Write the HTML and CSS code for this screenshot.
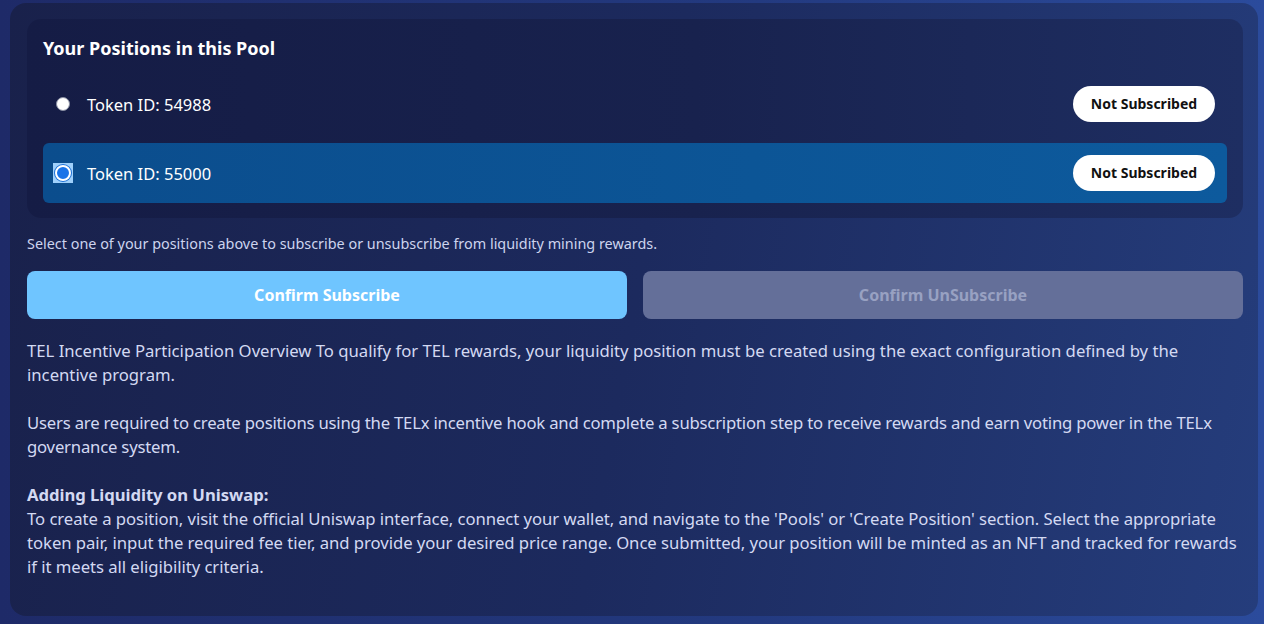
FILE: index.html
```html
<!DOCTYPE html>
<html lang="en">
<head>
	<meta charset="UTF-8">
	<meta name="viewport" content="width=device-width">
	<title>TELx positions</title>
	<link rel="stylesheet" href="styles.css">
</head>
<body>
<main class="card">

	<section class="positions">
		<h2 class="positions-title">Your Positions in this Pool</h2>

		<label class="position">
			<span class="radio-wrap"><input type="radio" name="position" class="radio" value="54988"></span>
			<span class="token-id">Token ID: 54988</span>
			<span class="badge">Not Subscribed</span>
		</label>

		<label class="position selected">
			<span class="radio-wrap focused"><input type="radio" name="position" class="radio" value="55000" checked></span>
			<span class="token-id">Token ID: 55000</span>
			<span class="badge">Not Subscribed</span>
		</label>
	</section>

	<p class="hint">Select one of your positions above to subscribe or unsubscribe from liquidity mining rewards.</p>

	<div class="actions">
		<button class="btn btn-primary">Confirm Subscribe</button>
		<button class="btn btn-disabled" disabled>Confirm UnSubscribe</button>
	</div>

	<div class="overview">
		<p>TEL Incentive Participation Overview To qualify for TEL rewards, your liquidity position must be created using the exact configuration defined by the incentive program.</p>
		<p class="tight">Users are required to create positions using the TELx incentive hook and complete a subscription step to receive rewards and earn voting power in the TELx governance system.</p>
		<p class="snug"><strong>Adding Liquidity on Uniswap:</strong><br>
		To create a position, visit the official Uniswap interface, connect your wallet, and navigate to the 'Pools' or 'Create Position' section. Select the appropriate token pair, input the required fee tier, and provide your desired price range. Once submitted, your position will be minted as an NFT and tracked for rewards if it meets all eligibility criteria.</p>
	</div>

</main>
</body>
</html>
```

FILE: styles.css
```css
html, body { height: 100%; }

body {
	margin: 0;
	padding: 3px 6px 8px 10px;
	box-sizing: border-box;
	background: linear-gradient(90deg, #1e2a68 0%, #233a80 60%, #2b4b9c 100%);
	font-family: "Noto Sans", "Open Sans", sans-serif;
	color: #d3d9f2;
}

.card {
	height: 100%;
	box-sizing: border-box;
	padding: 16px 15px 20px 17px;
	border-radius: 16px;
	background: linear-gradient(100deg, #19214b 0%, #1c2a5e 50%, #253d7c 100%);
}

/* positions panel */
.positions {
	background: linear-gradient(90deg, #151c45 0%, #18224e 55%, #1e2e62 100%);
	border-radius: 14px;
	padding: 16px 16px 15px;
}

.positions-title {
	margin: 0 0 13px;
	font-size: 18px;
	font-weight: 700;
	line-height: 26px;
	color: #fff;
}

.position {
	display: flex;
	align-items: center;
	height: 60px;
	padding: 0 12px;
	border-radius: 6px;
	cursor: pointer;
}

.position + .position { margin-top: 9px; }

.position.selected {
	background: linear-gradient(90deg, #0b4d8d 0%, #0c5596 60%, #0d5a9d 100%);
}

.radio-wrap {
	display: flex;
	align-items: center;
	justify-content: center;
	width: 16px;
	height: 16px;
	flex: none;
}

.radio-wrap.focused {
	width: 20px;
	height: 20px;
	margin: 0 -2px;
	background: #9fd0fb;
}

.radio {
	appearance: none;
	margin: 0;
	width: 14px;
	height: 14px;
	border-radius: 50%;
	background: #fff;
	border: 1px solid #8a8fa3;
	box-sizing: border-box;
}

.radio:checked {
	width: 16px;
	height: 16px;
	border: 2px solid #fff;
	background: #1a73e8;
	box-shadow: 0 0 0 1px #1a6fd8;
}

.token-id {
	margin-left: 16px;
	font-size: 16.5px;
	color: #fff;
}

.badge {
	margin-left: auto;
	width: 142px;
	height: 36px;
	line-height: 36px;
	text-align: center;
	border-radius: 18px;
	background: #fff;
	color: #111;
	font-size: 14px;
	font-weight: 700;
}

/* hint + actions */
.hint {
	margin: 17px 0 0;
	font-size: 14.4px;
	line-height: 17px;
	color: #cdd4ee;
}

.actions {
	display: flex;
	gap: 16px;
	margin-top: 19px;
}

.btn {
	flex: 1;
	height: 48px;
	border: none;
	border-radius: 8px;
	font-family: inherit;
	font-size: 16px;
	font-weight: 700;
}

.btn-primary {
	background: #6fc5ff;
	color: #fff;
}

.btn-disabled {
	background: #646f99;
	color: #98a1c2;
}

/* overview text */
.overview {
	margin-top: 20px;
	font-size: 16.7px;
	line-height: 24px;
	color: #d3d9f2;
}

.overview p { margin: 0 0 24px; }
.overview p:last-child { margin-bottom: 0; }
.overview p.tight { letter-spacing: -0.2px; }
.overview p.snug { letter-spacing: -0.05px; }
```
